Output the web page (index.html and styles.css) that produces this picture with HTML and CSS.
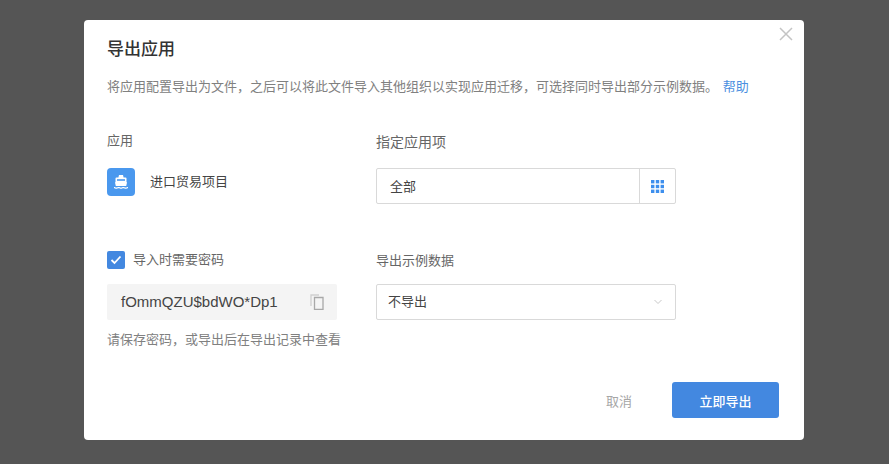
FILE: index.html
```html
<!DOCTYPE html>
<html lang="zh-CN">
<head>
<meta charset="utf-8">
<title>导出应用</title>
<link rel="stylesheet" href="styles.css">
</head>
<body>
<div class="overlay">
  <div class="modal">
    <button class="close" aria-label="关闭">
      <svg width="14" height="14" viewBox="0 0 14 14"><path d="M1 1l12 12M13 1L1 13" stroke="#c4c4c4" stroke-width="1.5" fill="none"/></svg>
    </button>
    <h1 class="title">导出应用</h1>
    <p class="desc">将应用配置导出为文件，之后可以将此文件导入其他组织以实现应用迁移，可选择同时导出部分示例数据。 <a class="help">帮助</a></p>
    <div class="row row-app">
      <div class="col-left">
        <div class="label label-app">应用</div>
        <div class="app">
          <span class="app-icon">
            <svg width="16" height="16" viewBox="0 0 16 16"><path fill="#fff" d="M6 1h4l.6 2.400h1.900a1 1 0 0 1 1 1V8l.5.400-.8 3.600H2.800L2 8.400 2.500 8V4.400a1 1 0 0 1 1-1h1.900z"/><path fill="#4a98ee" d="M4 5.200h8v1.600H4z"/><path fill="#fff" d="M1 13c1.200 0 1.200.5 2.333.5S4.500 13 5.667 13s1.200.5 2.333.5 1.200-.5 2.333-.5 1.200.5 2.334.5S13.800 13 15 13v1.200c-1.200 0-1.200.5-2.333.5s-1.167-.5-2.334-.5-1.200.5-2.333.5-1.167-.5-2.333-.5-1.200.5-2.334.5S2.200 14.200 1 14.200z"/></svg>
          </span>
          <span class="app-name">进口贸易项目</span>
        </div>
      </div>
      <div class="col-right">
        <div class="label label-items">指定应用项</div>
        <div class="field field-items">
          <span class="field-value">全部</span>
          <span class="field-btn">
            <svg width="13" height="13" viewBox="0 0 13 13" fill="#3d8fee"><rect width="3.400" height="3.400"/><rect x="4.800" width="3.400" height="3.400"/><rect x="9.600" width="3.400" height="3.400"/><rect y="4.800" width="3.400" height="3.400"/><rect x="4.800" y="4.800" width="3.400" height="3.400"/><rect x="9.600" y="4.800" width="3.400" height="3.400"/><rect y="9.600" width="3.400" height="3.400"/><rect x="4.800" y="9.600" width="3.400" height="3.400"/><rect x="9.600" y="9.600" width="3.400" height="3.400"/></svg>
          </span>
        </div>
      </div>
    </div>
    <div class="row row-pass">
      <div class="col-left">
        <label class="check">
          <span class="box"><svg width="12" height="10" viewBox="0 0 12 10"><path d="M1.500 5l3 3 6-6.500" stroke="#fff" stroke-width="1.800" fill="none"/></svg></span>
          <span>导入时需要密码</span>
        </label>
        <div class="pass">
          <span class="pass-text">fOmmQZU$bdWO*Dp1</span>
          <svg width="14" height="16" viewBox="0 0 14 16" fill="none" stroke="#a8a8a8"><path d="M4.500 3.500h8.500v12H4.500z" stroke-width="1.300"/><path d="M1 12V1h8" stroke="#cfcfcf" stroke-width="1.300"/></svg>
        </div>
        <div class="hint">请保存密码，或导出后在导出记录中查看</div>
      </div>
      <div class="col-right">
        <div class="label">导出示例数据</div>
        <div class="field field-sample">
          <span class="field-value select-value">不导出</span>
          <svg class="chev" width="8" height="6" viewBox="0 0 8 6"><path d="M.5 1l3.500 3.500L7.500 1" stroke="#c8c8c8" fill="none"/></svg>
        </div>
      </div>
    </div>
    <div class="footer">
      <button class="btn-cancel">取消</button>
      <button class="btn-primary">立即导出</button>
    </div>
  </div>
</div>
</body>
</html>
```
FILE: styles.css
```css
* { box-sizing: border-box; }
html, body { margin: 0; height: 100%; }
body {
  background: #555;
  font-family: "Liberation Sans", "Noto Sans CJK SC", sans-serif;
  overflow: hidden;
}
.overlay {
  display: flex;
  padding: 20px 0 0 84px;
  height: 100%;
}
.modal {
  position: relative;
  width: 720px;
  height: 420px;
  background: #fff;
  border-radius: 4px;
  padding: 19px 23px 0;
}
.close {
  position: absolute;
  top: 7px;
  right: 11px;
  padding: 0;
  border: 0;
  background: none;
  line-height: 0;
}
.title {
  margin: 0;
  font-size: 17px;
  line-height: 22px;
  font-weight: 500;
  color: #333;
}
.desc {
  margin: 16px 0 0;
  font-size: 13px;
  line-height: 20px;
  color: #808080;
  white-space: nowrap;
}
.help { color: #4a8fe0; margin-left: 1px; }
.row { display: flex; }
.row-app { margin-top: 34px; }
.row-pass { margin-top: 47px; }
.col-left { width: 269px; }
.col-right { width: 300px; }
.label { font-size: 13px; line-height: 20px; color: #666; }
.label-items { font-size: 14px; margin-top: 1px; }
.app {
  display: flex;
  align-items: center;
  margin-top: 17px;
}
.app-icon {
  display: flex;
  align-items: center;
  justify-content: center;
  width: 28px;
  height: 28px;
  border-radius: 4px;
  background: #4a98ee;
}
.app-name { margin-left: 15px; margin-bottom: 3px; font-size: 13px; color: #444; }
.field {
  display: flex;
  align-items: center;
  justify-content: space-between;
  height: 36px;
  border: 1px solid #d9d9d9;
  border-radius: 2px;
}
.field-items { margin-top: 16px; }
.field-sample { margin-top: 13px; }
.field-value { padding: 0 0 2px 13px; font-size: 13px; color: #444; }
.select-value { padding: 0 0 4px 11px; }
.field-btn {
  display: flex;
  align-items: center;
  justify-content: center;
  width: 36px;
  height: 100%;
  border-left: 1px solid #d9d9d9;
}
.chev { margin-right: 13px; }
.check {
  display: flex;
  align-items: center;
  gap: 8px;
  font-size: 13px;
  line-height: 18px;
  color: #666;
}
.box {
  display: flex;
  align-items: center;
  justify-content: center;
  width: 18px;
  height: 18px;
  border-radius: 2px;
  background: #4388e0;
}
.pass {
  display: flex;
  align-items: center;
  justify-content: space-between;
  width: 230px;
  height: 36px;
  margin-top: 15px;
  padding: 0 13px 0 14px;
  background: #f4f4f4;
  border-radius: 2px;
}
.pass-text { padding-bottom: 2px; font-size: 15px; color: #444; }
.hint { margin-top: 10px; font-size: 13px; line-height: 20px; color: #808080; white-space: nowrap; }
.footer {
  position: absolute;
  left: 0;
  right: 25px;
  bottom: 22px;
  display: flex;
  justify-content: flex-end;
  align-items: center;
}
.btn-cancel {
  margin-right: 40px;
  padding: 0;
  border: 0;
  background: none;
  font: inherit;
  font-size: 13px;
  color: #a6a6a6;
}
.btn-primary {
  width: 107px;
  height: 36px;
  border: 0;
  border-radius: 3px;
  background: #4388e0;
  color: #fff;
  font: inherit;
  font-size: 13px;
  font-weight: 500;
}
```
